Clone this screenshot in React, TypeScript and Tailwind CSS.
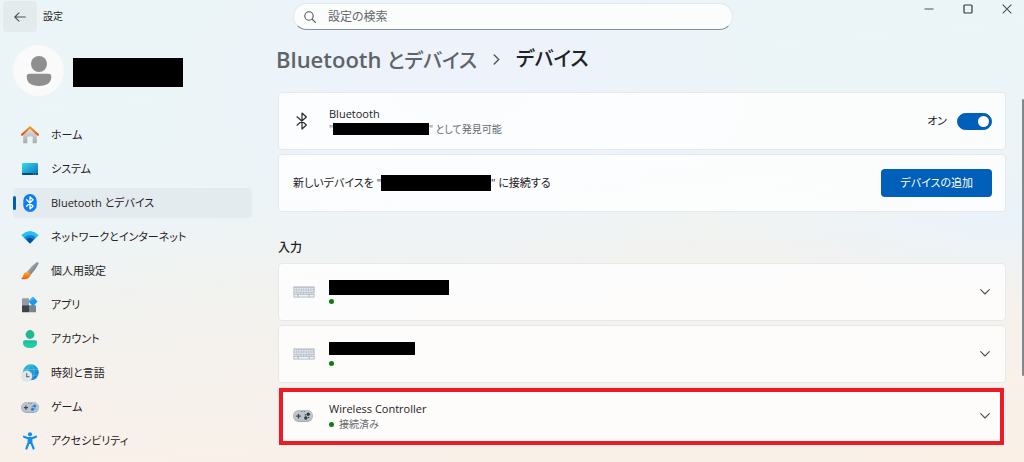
import type { ReactNode } from "react";

/* Iconos de la barra lateral */

function HomeIcon() {
  return (
    <svg viewBox="0 0 18 18" className="size-[18px]" aria-hidden="true">
      <defs>
        <linearGradient id="homeBody" x1="0" y1="0" x2="0" y2="1">
          <stop offset="0" stopColor="#e4e4e4" />
          <stop offset="1" stopColor="#a9a9ab" />
        </linearGradient>
        <linearGradient id="homeRoof" x1="0" y1="0" x2="0" y2="1">
          <stop offset="0" stopColor="#f59a20" />
          <stop offset="1" stopColor="#d9530f" />
        </linearGradient>
      </defs>
      <path d="M2.200 8 9 1.800 15.800 8v8.400q0 .9-.9.9h-3.200v-6.100q0-.6-.6-.6H6.900q-.6 0-.6.6v6.100H3.100q-.9 0-.9-.9Z" fill="url(#homeBody)" />
      <path d="M1 8.700 9 1.300l8 7.400" fill="none" stroke="url(#homeRoof)" strokeWidth="2" strokeLinecap="round" strokeLinejoin="round" />
    </svg>
  );
}

function SystemIcon() {
  return (
    <svg viewBox="0 0 18 18" className="size-[18px]" aria-hidden="true">
      <defs>
        <linearGradient id="sysScreen" x1="0" y1="0" x2="1" y2="1">
          <stop offset="0" stopColor="#38dbe6" />
          <stop offset="1" stopColor="#0c6fc4" />
        </linearGradient>
      </defs>
      <rect x="1" y="3" width="16" height="12" rx="1" fill="url(#sysScreen)" />
      <path d="M1 13h16v1q0 1-1 1H2q-1 0-1-1Z" fill="#0b4a78" />
      <path d="M12 14h.9M14.200 14h.9" stroke="#9bd6ef" strokeWidth=".8" />
    </svg>
  );
}

function BluetoothIcon() {
  return (
    <svg viewBox="0 0 18 18" className="size-[18px]" aria-hidden="true">
      <rect x="2.300" y="0" width="13.400" height="18" rx="6.700" fill="#0a7dfa" />
      <path d="m5.600 5.800 6.500 6.400L9 15V3l3.100 2.800-6.500 6.400" fill="none" stroke="#fff" strokeWidth="1.300" strokeLinejoin="round" strokeLinecap="round" />
    </svg>
  );
}

function NetworkIcon() {
  return (
    <svg viewBox="0 0 18 18" className="size-[18px]" aria-hidden="true">
      <path d="M.8 6.800Q9-.6 17.200 6.800q.5.500 0 1L9.600 15q-.6.500-1.200 0L.8 7.800q-.5-.5 0-1Z" fill="#27c1ee" />
      <path d="M3.200 9.400Q9 4.600 14.800 9.400L9.600 15q-.6.500-1.200 0Z" fill="#1583dc" />
      <path d="M5.200 11.500Q9 8.200 12.800 11.500L9.600 15q-.6.500-1.200 0Z" fill="#0c4e9c" />
    </svg>
  );
}

function BrushIcon() {
  return (
    <svg viewBox="0 0 18 18" className="size-[18px]" aria-hidden="true">
      <defs>
        <linearGradient id="brushHandle" x1="0" y1="0" x2="1" y2="1">
          <stop offset=".2" stopColor="#b0b8bf" />
          <stop offset=".8" stopColor="#68727c" />
        </linearGradient>
        <linearGradient id="brushTip" x1="0" y1="0" x2="0" y2="1">
          <stop offset="0" stopColor="#ffb02e" />
          <stop offset="1" stopColor="#e9590c" />
        </linearGradient>
      </defs>
      <path d="M5.800 9.900Q10.800 3.400 15.700.300q2.100-.7 1.800 1.400Q14.900 7.300 9.400 13.300Z" fill="url(#brushHandle)" />
      <path d="M5.600 9.900q3.900.4 3.900 3.700Q7.800 17.900 1.100 17.200q-1.300-.4-.2-1.200 1.300-.8 1.500-3 .8-3 3.200-3.100Z" fill="url(#brushTip)" />
    </svg>
  );
}

function AppsIcon() {
  return (
    <svg viewBox="0 0 18 18" className="size-[18px]" aria-hidden="true">
      <path d="M1 3.200q0-.9.9-.9H8v7H1Z" fill="#929ca6" />
      <path d="M1 9.300h7v7H1.900q-.9 0-.9-.9Z" fill="#3f4449" />
      <path d="M8 9.300h7v6.100q0 .9-.9.9H8Z" fill="#7b838b" />
      <path d="m11.300 1.300-3.400 3.600q-.5.6 0 1.200l3.400 3.600q.6.5 1.200 0l3.600-3.600q.5-.6 0-1.200l-3.600-3.600q-.6-.5-1.200 0Z" fill="#1b98ee" />
      <path d="m11.300 1.300-3.400 3.600q-.5.6 0 1.200L14 2.800l-1.500-1.500q-.6-.5-1.200 0Z" fill="#38b9f7" />
    </svg>
  );
}

function AccountIcon() {
  return (
    <svg viewBox="0 0 18 18" className="size-[18px]" aria-hidden="true">
      <circle cx="9" cy="4.500" r="4.400" fill="#20b795" />
      <path d="M3.800 10.300h10.400q1.800 0 1.800 1.900 0 5.600-7 5.600t-7-5.600q0-1.900 1.800-1.900Z" fill="#23bd99" />
      <path d="M2.100 13.200h13.800q-.9 4.600-6.900 4.600t-6.900-4.600Z" fill="#1cd0a8" />
    </svg>
  );
}

function TimeIcon() {
  return (
    <svg viewBox="0 0 18 18" className="size-[18px]" aria-hidden="true">
      <defs>
        <linearGradient id="globe" x1="0" y1="0" x2="1" y2="1">
          <stop offset="0" stopColor="#2cc7c9" />
          <stop offset="1" stopColor="#1373d6" />
        </linearGradient>
      </defs>
      <circle cx="9.800" cy="8.300" r="8" fill="url(#globe)" />
      <path d="M2.500 5.500h14.600M2.500 11.200h14.600M9.800.3q-3.500 3.500-3.500 8t3.500 8q3.500-3.500 3.500-8t-3.500-8Z" fill="none" stroke="#7fd8ee" strokeOpacity=".5" strokeWidth=".8" />
      <circle cx="5.700" cy="12.200" r="5.600" fill="#e1e4e8" />
      <path d="M5.700 9v3.600h2.700" fill="none" stroke="#6a7078" strokeWidth="1.100" />
    </svg>
  );
}

function GamepadIcon({ accent, className }: { accent: string; className: string }) {
  return (
    <svg viewBox="0 0 20 14" className={className} aria-hidden="true">
      <rect x="0" y="1" width="20" height="12" rx="6" fill="#a3adb6" />
      <rect x=".6" y="1.200" width="18.800" height="10.600" rx="5.300" fill="#bcc5cc" />
      <path d="M5.500 4.900v4.600M3.200 7.200h4.600" stroke="#40464c" strokeWidth="1.300" />
      <path d="M8.400 2.500h.9M10.800 2.500h.9" stroke="#50565c" strokeWidth=".9" />
      <circle cx="12.800" cy="9" r="1.700" fill={accent} />
      <circle cx="15.200" cy="5.300" r="1.700" fill={accent} />
      <circle cx="12.400" cy="5.900" r=".7" fill={accent} />
      <circle cx="15.600" cy="8.500" r=".7" fill={accent} />
    </svg>
  );
}

function AccessibilityIcon() {
  return (
    <svg viewBox="0 0 18 18" className="size-[18px]" aria-hidden="true">
      <circle cx="9" cy="2.300" r="2.100" fill="#1290e6" />
      <path d="M3 4.700 7 6.200h4l4-1.500M7.700 6.500v4.200L5.400 16.500M10.300 6.500v4.200l2.300 5.800" fill="none" stroke="#1290e6" strokeWidth="2.200" strokeLinecap="round" strokeLinejoin="round" />
      <path d="M7 6h4v6H7Z" fill="#1290e6" />
    </svg>
  );
}

function KeyboardIcon() {
  return (
    <svg viewBox="0 0 22 12" className="h-3 w-[22px] shrink-0" aria-hidden="true">
      <rect x=".4" y=".4" width="21.200" height="11.200" rx="1" fill="#bcc4ce" stroke="#ced4db" strokeWidth=".8" />
      <path d="M1.500 2.700h19M1.500 5.300h19" stroke="#e6eaef" strokeWidth="1.400" strokeDasharray="1.700 .7" />
      <path d="M1.500 7.400h2.800m1 0h1.800m1 0h1.800m1 0h1.800m1 0h1.800m1 0h1.800m1 0h2" stroke="#e2e6ec" strokeWidth="1" />
      <path d="M1.500 9.700h2.800M6 9.700h9.500M17 9.700h3.500" stroke="#f0f3f6" strokeWidth="1.400" />
    </svg>
  );
}

function ChevronDown() {
  return (
    <svg viewBox="0 0 10 6" className="h-[6px] w-[10px] shrink-0" aria-hidden="true">
      <path d="m.7.700 4.300 4.300L9.300.700" fill="none" stroke="#50504f" strokeWidth="1.100" strokeLinecap="round" strokeLinejoin="round" />
    </svg>
  );
}

const navItems: { label: string; icon: ReactNode; active?: boolean }[] = [
  { label: "ホーム", icon: <HomeIcon /> },
  { label: "システム", icon: <SystemIcon /> },
  { label: "Bluetooth とデバイス", icon: <BluetoothIcon />, active: true },
  { label: "ネットワークとインターネット", icon: <NetworkIcon /> },
  { label: "個人用設定", icon: <BrushIcon /> },
  { label: "アプリ", icon: <AppsIcon /> },
  { label: "アカウント", icon: <AccountIcon /> },
  { label: "時刻と言語", icon: <TimeIcon /> },
  { label: "ゲーム", icon: <GamepadIcon accent="#1b7fdc" className="h-[13px] w-[18px]" /> },
  { label: "アクセシビリティ", icon: <AccessibilityIcon /> },
];

function TitleBar() {
  return (
    <header className="flex h-[34px] items-start pt-px pr-[10px] pl-[3px]">
      <div className="flex w-[290px] shrink-0 items-center gap-[6px]">
        <button type="button" aria-label="戻る" className="flex h-[31px] w-[34px] items-center justify-center rounded bg-[#e3ebed]">
          <svg viewBox="0 0 12 10" className="h-[10px] w-3" aria-hidden="true">
            <path d="M11.300 5H.8M5 .8.800 5 5 9.200" fill="none" stroke="#4c5254" strokeWidth="1.100" strokeLinecap="round" strokeLinejoin="round" />
          </svg>
        </button>
        <span className="text-[10px]">設定</span>
      </div>

      {/* Buscador */}
      <label className="mt-[2px] flex h-[27px] max-w-[440px] flex-1 items-center gap-3 rounded-full border border-[#e3e8ea] border-b-[#868f92] bg-[#fbfdfd] pl-[10px]">
        <svg viewBox="0 0 12 12" className="size-3 shrink-0" aria-hidden="true">
          <circle cx="5" cy="5" r="4.200" fill="none" stroke="#4f5456" strokeWidth="1.100" />
          <path d="m8.100 8.100 3.300 3.300" stroke="#4f5456" strokeWidth="1.200" strokeLinecap="round" />
        </svg>
        <input type="search" aria-label="設定の検索" placeholder="設定の検索" className="min-w-0 flex-1 bg-transparent text-xs outline-none placeholder:text-[#62676a]" />
      </label>

      {/* Controles de ventana */}
      <div className="ml-auto flex shrink-0">
        <button type="button" aria-label="最小化" className="flex h-4 w-[39px] items-center justify-center">
          <svg viewBox="0 0 10 10" className="size-[10px]" aria-hidden="true">
            <path d="M.5 5h9" stroke="#4d5254" strokeWidth="1" />
          </svg>
        </button>
        <button type="button" aria-label="最大化" className="flex h-4 w-[39px] items-center justify-center">
          <svg viewBox="0 0 10 10" className="size-[10px]" aria-hidden="true">
            <rect x="1" y="1" width="8" height="8" rx="1" fill="none" stroke="#33383a" strokeWidth="1.200" />
          </svg>
        </button>
        <button type="button" aria-label="閉じる" className="-mr-3 flex h-4 w-[39px] items-center justify-center">
          <svg viewBox="0 0 10 10" className="size-[10px]" aria-hidden="true">
            <path d="m.7.700 8.600 8.600M9.300.700.700 9.300" stroke="#4d5254" strokeWidth="1.100" />
          </svg>
        </button>
      </div>
    </header>
  );
}

function Sidebar() {
  return (
    <aside className="w-[252px] shrink-0 pt-[11px] pl-[13px]">
      <div className="flex items-center gap-[9px]">
        <div className="flex size-[51px] items-center justify-center rounded-full bg-[#fafafa]">
          <svg viewBox="0 0 26 30" className="h-[30px] w-[26px]" aria-hidden="true">
            <circle cx="13" cy="8" r="8" fill="#8f8f8f" />
            <path d="M3.500 17.800h19q2.800 0 2.800 2.800 0 9.400-12.300 9.400T.7 20.600q0-2.800 2.800-2.800Z" fill="#8f8f8f" />
          </svg>
        </div>
        <div className="mt-1 h-[29px] w-[110px] bg-black" />
      </div>

      <nav className="mt-6 flex flex-col gap-1">
        {navItems.map((item) => (
          <a
            key={item.label}
            href="#"
            aria-current={item.active ? "page" : undefined}
            className={`relative flex h-[30px] items-center gap-3 rounded pl-2 text-[11px] ${item.active ? "bg-[#e3ebee]" : ""}`}
          >
            {item.active && <span className="absolute left-0 h-[14px] w-[3px] rounded-full bg-[#005fb8]" />}
            <span className="flex w-[18px] shrink-0 justify-center">{item.icon}</span>
            <span>{item.label}</span>
          </a>
        ))}
      </nav>
    </aside>
  );
}

function Card({ children }: { children: ReactNode }) {
  return (
    <div className="relative flex h-[58px] items-center rounded border border-[#e6e9eb] bg-white/80 pr-[13px] pl-[14px]">
      {children}
    </div>
  );
}

function DeviceCard({ icon, children, highlighted }: { icon: ReactNode; children: ReactNode; highlighted?: boolean }) {
  return (
    <Card>
      <span className="flex w-9 shrink-0 items-center">{icon}</span>
      <div className="flex flex-1 flex-col">{children}</div>
      <button type="button" aria-label="展開" className="px-[2px] py-2">
        <ChevronDown />
      </button>
      {highlighted && <span className="pointer-events-none absolute top-0 right-px -bottom-px left-0 border-4 border-[#ed1c24]" />}
    </Card>
  );
}

function StatusDot() {
  return <span className="size-[5px] shrink-0 rounded-full bg-[#107c10]" />;
}

export default function App() {
  return (
    <div className="flex min-h-screen flex-col bg-[radial-gradient(ellipse_at_45%_15%,#eef2fc_0%,#eef2fc00_40%),radial-gradient(ellipse_at_100%_47%,#eaf3fb_0%,#eaf3fb00_22%),linear-gradient(175deg,#ebf5f7_0%,#ecf4f7_40%,#f3f2ee_60%,#f8f1eb_80%,#faf0e6_100%)] font-['Open_Sans','Noto_Sans_CJK_JP',sans-serif] text-[#1f2224] [font-feature-settings:'palt']">
      <TitleBar />

      <div className="flex flex-1">
        <Sidebar />

        <main className="min-w-0 flex-1 pt-2 pr-[18px] pl-[26px]">
          <h1 className="flex h-[34px] items-center gap-4 text-xl font-medium">
            <a href="#" className="-ml-[2px] text-[#5f6468]">
              <span className="text-[22px] font-semibold">Bluetooth</span> とデバイス
            </a>
            <svg viewBox="0 0 7 11" className="h-[11px] w-[7px]" aria-hidden="true">
              <path d="m1.200 1 4.500 4.500L1.200 10" fill="none" stroke="#55595c" strokeWidth="1.500" strokeLinecap="round" strokeLinejoin="round" />
            </svg>
            <span>デバイス</span>
          </h1>

          <section className="mt-4 flex flex-col gap-1">
            <Card>
              <span className="flex w-9 shrink-0 pl-[3px]">
                <svg viewBox="0 0 12 18" className="h-[18px] w-3" aria-hidden="true">
                  <path d="m1 4.800 9.400 8.200L6 17V1l4.400 4L1 13.200" fill="none" stroke="#2b2d2f" strokeWidth="1.200" strokeLinejoin="round" strokeLinecap="round" />
                </svg>
              </span>
              <div className="flex-1">
                <div className="text-[11px] leading-4">Bluetooth</div>
                <div className="flex h-[14px] items-center text-[10px] text-[#66696c]">
                  "<span className="h-3 w-24 bg-black" />" として発見可能
                </div>
              </div>
              <label className="flex items-center gap-[10px] text-[11px]">
                オン
                <span className="relative flex">
                  <input type="checkbox" role="switch" defaultChecked className="peer h-[17px] w-[35px] appearance-none rounded-full border border-[#868686] checked:border-[#005fb8] checked:bg-[#005fb8]" />
                  <span className="pointer-events-none absolute top-[3px] left-1 size-[11px] rounded-full bg-[#5d5d5d] peer-checked:right-[3px] peer-checked:left-auto peer-checked:bg-white" />
                </span>
              </label>
            </Card>

            <Card>
              <div className="flex flex-1 items-center text-[11px]">
                <span>新しいデバイスを "</span>
                <span className="h-4 w-[110px] bg-black" />
                <span>" に接続する</span>
              </div>
              <button type="button" className="h-7 rounded bg-[#005fb8] px-[19px] text-[11px] text-white">
                デバイスの追加
              </button>
            </Card>
          </section>

          <h2 className="mt-[26px] mb-[5px] text-xs leading-5 font-medium">入力</h2>

          <section className="flex flex-col gap-1">
            <DeviceCard icon={<KeyboardIcon />}>
              <span className="mb-1 h-[15px] w-[120px] bg-black" />
              <StatusDot />
            </DeviceCard>
            <DeviceCard icon={<KeyboardIcon />}>
              <span className="mb-[6px] h-[13px] w-[86px] bg-black" />
              <StatusDot />
            </DeviceCard>
            <DeviceCard icon={<GamepadIcon accent="#33383d" className="h-[14px] w-5" />} highlighted>
              <span className="text-[11px] leading-4">Wireless Controller</span>
              <span className="flex h-[14px] items-center gap-[5px] text-[10px] text-[#66696c]">
                <StatusDot />
                接続済み
              </span>
            </DeviceCard>
          </section>
        </main>
      </div>

      {/* Barra de desplazamiento */}
      <div className="absolute top-[99px] right-0 h-[277px] w-[2px] rounded-full bg-[#85888a]" />
    </div>
  );
}
